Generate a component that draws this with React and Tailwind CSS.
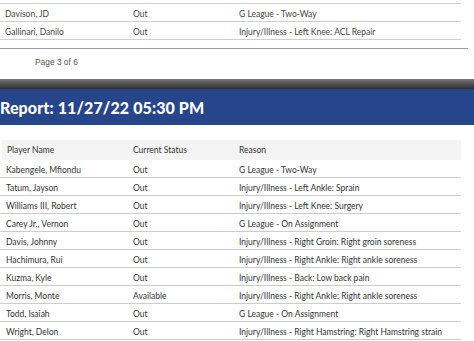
import React from "react";

const topRows = [
  ["Davison, JD", "Out", "G League - Two-Way"],
  ["Gallinari, Danilo", "Out", "Injury/Illness - Left Knee: ACL Repair"],
];

const rows = [
  ["Kabengele, Mfiondu", "Out", "G League - Two-Way"],
  ["Tatum, Jayson", "Out", "Injury/Illness - Left Ankle: Sprain"],
  ["Williams III, Robert", "Out", "Injury/Illness - Left Knee: Surgery"],
  ["Carey Jr., Vernon", "Out", "G League - On Assignment"],
  ["Davis, Johnny", "Out", "Injury/Illness - Right Groin: Right groin soreness"],
  ["Hachimura, Rui", "Out", "Injury/Illness - Right Ankle: Right ankle soreness"],
  ["Kuzma, Kyle", "Out", "Injury/Illness - Back: Low back pain"],
  ["Morris, Monte", "Available", "Injury/Illness - Right Ankle: Right ankle soreness"],
  ["Todd, Isaiah", "Out", "G League - On Assignment"],
  ["Wright, Delon", "Out", "Injury/Illness - Right Hamstring: Right Hamstring strain"],
];

export default function App() {
  return (
    <div className="w-[474px] h-[341px] overflow-hidden bg-white">
      {/* top table fragment */}
      <div className="mt-[3px] w-[461px] border-t border-[#cfcfcf] font-['Lato',sans-serif] text-[8.5px] text-[#444]">
        {topRows.map((r) => (
          <div key={r[0]} className="flex h-[18px] pt-[4px] leading-[12px] border-b border-[#cfcfcf]">
            <div className="w-[133px] pl-[5px]">{r[0]}</div>
            <div className="w-[106px]">{r[1]}</div>
            <div>{r[2]}</div>
          </div>
        ))}
      </div>
      <div className="mt-[8px] w-[468px] h-[1px] bg-[#a0a0a0]" />
      <div className="h-[30px] pl-[35px] pt-[7px] font-['Liberation_Sans',Arial,sans-serif] text-[8.4px] leading-[12px] text-[#555]">
        Page 3 of 6
      </div>
      <div className="h-[10px] bg-gradient-to-b from-[#777] to-[#2f2f2f]" />
      <div className="h-[36px] bg-[#27458a] flex items-center pt-[2px]">
        <span className="font-['Lato',sans-serif] font-black text-[16px] text-white tracking-[0.1px]">
          Report: 11/27/22 05:30 PM
        </span>
      </div>
      <div className="mt-[15px] ml-[2px] w-[459px] h-[20px] bg-[#f4f4f4] flex items-center font-['Lato',sans-serif] text-[8.5px] text-[#333]">
        <div className="w-[131px] pl-[5px]">Player Name</div>
        <div className="w-[106px]">Current Status</div>
        <div>Reason</div>
      </div>
      <div className="w-[461px] font-['Lato',sans-serif] text-[8.5px] text-[#333]">
        {rows.map((r) => (
          <div key={r[0]} className="flex h-[18px] pt-[4px] leading-[12px] border-b border-[#cdcdcd]">
            <div className="w-[133px] pl-[6px]">{r[0]}</div>
            <div className="w-[106px]">{r[1]}</div>
            <div>{r[2]}</div>
          </div>
        ))}
      </div>
    </div>
  );
}
